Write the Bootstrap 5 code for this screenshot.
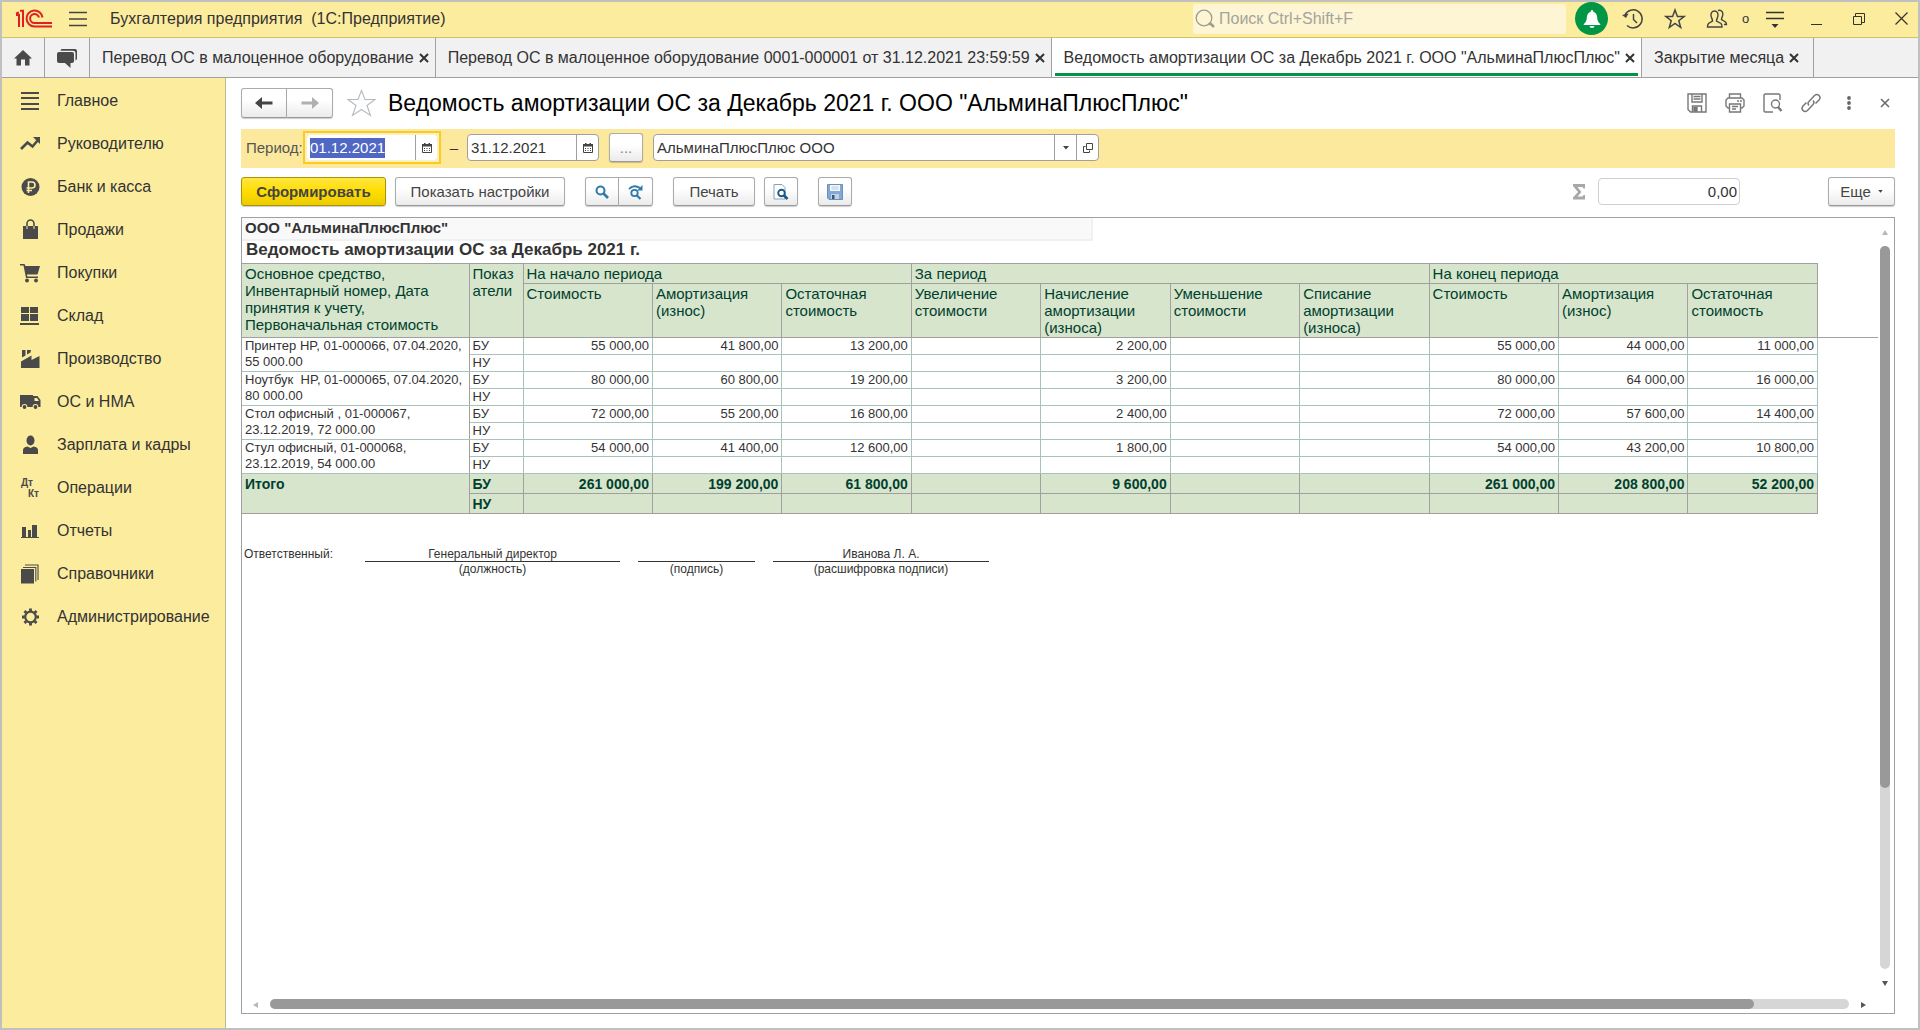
<!DOCTYPE html>
<html lang="ru">
<head>
<meta charset="utf-8">
<meta name="viewport" content="width=device-width, initial-scale=1">
<title>Бухгалтерия предприятия</title>
<link href="https://cdn.jsdelivr.net/npm/bootstrap@5.3.0/dist/css/bootstrap.min.css" rel="stylesheet">
<style>
:root{--yl:#fbec9e;--ln:#a0a0a0;--ink:#333;--gr:#d7e5cc;--tx:#00402f}
body{font-family:"Liberation Sans",Arial,sans-serif;font-size:16px;line-height:20px;color:var(--ink);background:#fff}
.app-frame{min-height:100vh;border:2px solid #c0c0c0}
svg{display:block;flex:none}
button,.app-frame input{font:inherit;color:inherit}
.plain{border:0;background:none;padding:0;display:flex;align-items:center;justify-content:center}
.topbar{height:36px;background:var(--yl);border-bottom:1px solid #cfc06a;padding-bottom:2px}
.app-name{white-space:pre}
.logo-area{width:108px;padding-left:13px;gap:16px}
.find-box{width:373px;height:30px;background:#fdf5d4;border-radius:3px;padding-left:2px;gap:4px;margin-right:9px}
.find-box input{border:0;background:none;outline:0;width:300px;padding:0}
.find-box input::placeholder{color:#a4a49c;opacity:1}
.bell{width:33px;height:33px;border-radius:50%;background:#009646}
.t-s{width:34px;height:30px}
.t-l{width:50px;height:30px}
.cnt{font-size:13px;width:8px}
.tabs{height:40px;background:#f1f1f1;border-bottom:1px solid var(--ln)}
.tab-i{border-right:1px solid var(--ln);position:relative}
.tab-i a{color:var(--ink);text-decoration:none;white-space:nowrap}
.ti-home{width:42px}
.ti-chat{width:44px}
.tab-t{padding:0 6px 0 12px;gap:5px}
.tab-short{padding-right:14px}
.tab-on{background:#fff}
.tab-on::after{content:"";position:absolute;left:3px;right:3px;bottom:1px;height:3px;background:#009646}
.side{width:224px;background:var(--yl);border-right:1px solid #bfb890;padding-top:1px}
.side a{height:43px;padding-left:17px;gap:14px;color:var(--ink);text-decoration:none}
.work{padding:10px 23px 14px 15px;min-width:0}
.tbtn{height:29px;border:1px solid #ababab;border-bottom-color:#999;border-radius:3px;background:linear-gradient(#fff 40%,#ebebeb);box-shadow:0 1px 1px #0003;display:flex;align-items:center;justify-content:center;padding:0;color:#444}
.tbtn.go{background:linear-gradient(#ffe640,#ffdd00 50%,#eccb00);border-color:#a89404;font-weight:700;width:145px}
.pair .tbtn:first-child{border-radius:3px 0 0 3px}
.pair .tbtn:last-child{border-radius:0 3px 3px 0;border-left:0}
.sq{width:34px}
.nav-b{width:46px;height:30px}
.w-set{width:170px}
.w-print{width:82px}
.w-more{width:67px;gap:7px}
.dots{margin:0 10px;color:#888}
.near{margin-left:9px}
.far{margin-left:20px}
.fav{margin:0 12px 0 14px}
.head-t{font-size:23px;line-height:30px;color:#000;font-weight:400}
.acts{gap:14px}
.act{width:24px}
.act:last-child{width:20px}
.band{height:39px;background:#fce99e;margin-top:11px;padding:0 0 2px 5px;font-size:15px}
.band label{width:57px;color:#555}
.dash{width:26px}
.fld{height:27px;border:1px solid var(--ln);border-radius:4px;background:#fff;overflow:hidden}
.fld input{border:0;outline:0;padding:0 0 0 3px;background:none;min-width:0}
.fld button{border-left:1px solid var(--ln);width:22px}
.w-date{width:108px}
.w-org{width:400px}
.hot{border:2px solid #fbcb20;padding:2px;background:#fdf0c0}
.hot .fld{border:0;height:25px}
.fld input::selection{background:#5068c4;color:#fff}
.tools{padding-top:9px;font-size:15px}
.sum-i{width:142px;height:27px;border:1px solid #d0d0d0;border-radius:4px;text-align:right;padding:0 2px;margin:0 88px 0 12px}
.sheet{border:1px solid var(--ln);margin-top:11px;min-height:400px}
.s1{width:851px;height:23px;background:#f9f9f9;border:solid #f1f1f1;border-width:0 2px 2px 0;font-size:15px;font-weight:700;padding-left:3px;line-height:20px}
.s2{font-size:17px;font-weight:700;line-height:18px;padding:0 0 4px 4px}
.rep{border-collapse:collapse;table-layout:fixed;width:1576px;font-size:13px;line-height:16px}
.rep td,.rep th{padding:0 3px;vertical-align:top;border:1px solid #a8c4ba;height:17px;font-weight:400;white-space:pre-wrap}
.rep td.n{text-align:right}
.rep td:first-child[rowspan],.rep th:first-child{border-left:0}
.rep thead th,.rep tfoot td{background:var(--gr);color:var(--tx);border-color:var(--ln)}
.rep thead th{font-size:15px;line-height:17px;padding-top:1px;height:20px}
.rep thead tr+tr th{height:54px}
.rep tfoot td{font-size:14px;line-height:18px;padding-top:1px;font-weight:700;height:20px}
.rep tbody td[rowspan]{border-right-color:var(--ln)}
.c-name{width:227px}
.c-ind{width:54px}
.rule{height:1px;background:var(--ln);width:60px;margin-top:74px}
.sign{font-size:12px;line-height:15px;padding:33px 0 0 2px}
.sign-who{width:121px}
.slot{text-align:center;margin-right:18px}
.slot div{border-bottom:1px solid #333;height:15px}
.slot-a{width:255px}
.slot-b{width:117px}
.slot-c{width:216px}
.vbar{width:15px;padding:12px 4px 12px 0}
.hbar{height:15px;padding:0 28px 0 11px}
.vt{width:10px;border-radius:5px;background:#d6d6d6;margin:11px 0 12px}
.vt div{border-radius:5px;background:#999}
.ht{height:10px;border-radius:5px;background:#d6d6d6;margin:1px 12px}
.ht div{height:10px;border-radius:5px;background:#999}
</style>
</head>
<body>
<div class="app-frame d-flex flex-column">
<header class="topbar d-flex align-items-center">
  <div class="logo-area d-flex align-items-center">
    <svg width="38" height="20" viewBox="0 0 38 20" fill="none" stroke="#e02020" stroke-width="2"><path d="M1 6H4V18M1 4.500 4 3.500M5 1.800H8V18"/><path d="M27.500 8.500A8 8 0 1 0 19.500 17.500H37"/><path d="M24 8.500A4.500 4.500 0 1 0 19.500 14H37"/></svg>
    <button class="plain" aria-label="Меню"><svg width="19" height="18" viewBox="0 0 19 18" stroke="#444" stroke-width="1.500"><path d="M0 2.500H18M0 9H18M0 15.500H18"/></svg></button>
  </div>
  <div class="flex-grow-1 app-name">Бухгалтерия предприятия  (1С:Предприятие)</div>
  <label class="find-box d-flex align-items-center"><svg width="20" height="20" viewBox="0 0 20 20" fill="none" stroke="#9c9c90" stroke-width="1.300"><circle cx="9" cy="9" r="7.800"/><path d="M13.500 15H16L19 18" stroke-width="2.500"/></svg><input type="text" placeholder="Поиск Ctrl+Shift+F" aria-label="Поиск"></label>
  <button class="plain bell" aria-label="Уведомления"><svg width="20" height="20" viewBox="0 0 20 20" fill="#fff"><path d="M10 1C11 1 11.500 2 11.500 3 15 4 15 7 15.500 11 16 13.500 18 14 18.500 16H1.500C2 14 4 13.500 4.500 11 5 7 5 4 8.500 3 8.500 2 9 1 10 1ZM7.500 17H12.500C12 19.500 8 19.500 7.500 17Z"/></svg></button>
  <button class="plain t-l" aria-label="История"><svg width="22" height="22" viewBox="0 0 22 22" fill="none" stroke="#444" stroke-width="1.500"><path d="M3 7A9 9 0 1 1 5 17.500M11.500 6V11.500L15 15"/><path d="M0 7 6.500 5.500 4 10Z" fill="#444" stroke="none"/></svg></button>
  <button class="plain t-s" aria-label="Избранное"><svg width="22" height="22" viewBox="0 0 22 22" fill="none" stroke="#444" stroke-width="1.500"><path d="M11 2 13.400 8.600H20L14.800 12.700 16.700 19.500 11 15.500 5.300 19.500 7.200 12.700 2 8.600H8.600Z"/></svg></button>
  <button class="plain t-l" aria-label="Пользователи"><svg width="22" height="20" viewBox="0 0 22 20" fill="none" stroke="#444" stroke-width="1.400"><path d="M8.500 2C11 2 12.300 4 12 6.500 11.700 9 10.500 10 10.500 12L15 14.500C16 15.500 16 18 16 18H1.500C1.500 18 1.500 15.500 2.500 14.500L6.500 12C6.500 10 5.300 9 5 6.500 4.700 4 6 2 8.500 2Z"/><path d="M12 1.500C16 .5 17.500 3.500 16.500 7 16 8.500 15.500 9.500 15.500 10.500L19.500 13C20.500 14 20.500 15.500 20.500 15.500H18"/></svg></button>
  <span class="cnt">o</span>
  <button class="plain t-l" aria-label="Настройки"><svg width="20" height="20" viewBox="0 0 20 20"><path d="M1 3.500H19M1 9.500H19" stroke="#333" stroke-width="1.600"/><path d="M6.500 15H13.500L10 19Z" fill="#333"/></svg></button>
  <button class="plain t-s" aria-label="Свернуть"><svg width="12" height="14" viewBox="0 0 12 14"><path d="M0 12.500H11" stroke="#333"/></svg></button>
  <button class="plain t-l" aria-label="Развернуть"><svg width="12" height="12" viewBox="0 0 12 12" fill="none" stroke="#333"><path d="M.5 3.500H8.500V11.500H.5ZM2.500 3.500V.5H11.500V9.500H8.500"/></svg></button>
  <button class="plain t-s" aria-label="Закрыть"><svg width="13" height="13" viewBox="0 0 13 13" stroke="#333" stroke-width="1.200"><path d="M.5.5 12.500 12.500M12.500.5.5 12.500"/></svg></button>
</header>
<nav class="tabs d-flex">
  <div class="tab-i d-flex"><button class="plain ti-home" aria-label="Начальная страница"><svg width="20" height="18" viewBox="0 0 20 18" fill="#4a4a4a"><path d="M10 1 19 9.500H16.500V16.500H12V10.500H8V16.500H3.500V9.500H1Z"/></svg></button></div>
  <div class="tab-i d-flex"><button class="plain ti-chat" aria-label="Обсуждения"><svg width="22" height="20" viewBox="0 0 22 20" fill="#4a4a4a"><path d="M6 1H19Q21 1 21 3V10.500Q21 12 19.500 12.500V5Q19.500 2.800 17 2.800H4.500Q4.500 1 6 1Z"/><path d="M3 4H16Q18 4 18 6V13Q18 15 16 15H14.500V20L9 15H3Q1 15 1 13V6Q1 4 3 4Z"/></svg></button></div>
  <div class="tab-i tab-t d-flex align-items-center"><a href="#">Перевод ОС в малоценное оборудование</a><button class="plain" aria-label="Закрыть вкладку"><svg width="10" height="10" viewBox="0 0 10 10" stroke="#333" stroke-width="2"><path d="M1 1 9 9M9 1 1 9"/></svg></button></div>
  <div class="tab-i tab-t d-flex align-items-center"><a href="#">Перевод ОС в малоценное оборудование 0001-000001 от 31.12.2021 23:59:59</a><button class="plain" aria-label="Закрыть вкладку"><svg width="10" height="10" viewBox="0 0 10 10" stroke="#333" stroke-width="2"><path d="M1 1 9 9M9 1 1 9"/></svg></button></div>
  <div class="tab-i tab-t tab-on d-flex align-items-center"><a href="#">Ведомость амортизации ОС за Декабрь 2021 г. ООО "АльминаПлюсПлюс"</a><button class="plain" aria-label="Закрыть вкладку"><svg width="10" height="10" viewBox="0 0 10 10" stroke="#333" stroke-width="2"><path d="M1 1 9 9M9 1 1 9"/></svg></button></div>
  <div class="tab-i tab-t tab-short d-flex align-items-center"><a href="#">Закрытие месяца</a><button class="plain" aria-label="Закрыть вкладку"><svg width="10" height="10" viewBox="0 0 10 10" stroke="#333" stroke-width="2"><path d="M1 1 9 9M9 1 1 9"/></svg></button></div>
</nav>
<div class="d-flex flex-grow-1">
<nav class="side flex-shrink-0">
  <a href="#" class="d-flex align-items-center"><svg width="24" height="24" viewBox="0 0 24 24" stroke="#4a4a4a" stroke-width="2"><path d="M2 4H20M2 9H20M2 15H20M2 20H20"/></svg>Главное</a>
  <a href="#" class="d-flex align-items-center"><svg width="24" height="24" viewBox="0 0 24 24"><path d="M2 17 8.500 10.500 13.500 14.500 19 8" fill="none" stroke="#4a4a4a" stroke-width="2.600"/><path d="M14 5H21V12Z" fill="#4a4a4a"/></svg>Руководителю</a>
  <a href="#" class="d-flex align-items-center"><svg width="24" height="24" viewBox="0 0 24 24"><circle cx="11.500" cy="12" r="9" fill="#4a4a4a"/><path d="M9.500 18V7H13A3 3 0 0 1 13 13H7.500M7.500 15.500H13" fill="none" stroke="#fbec9e" stroke-width="1.600"/></svg>Банк и касса</a>
  <a href="#" class="d-flex align-items-center"><svg width="24" height="24" viewBox="0 0 24 24"><path d="M4 8H19V21H4Z" fill="#4a4a4a"/><path d="M8 11V5.500A3.500 3.500 0 0 1 15 5.500V11" fill="none" stroke="#4a4a4a" stroke-width="1.600"/><path d="M8 8V11M15 8V11" stroke="#fbec9e"/></svg>Продажи</a>
  <a href="#" class="d-flex align-items-center"><svg width="24" height="24" viewBox="0 0 24 24" fill="#4a4a4a"><path d="M1 3H5.500L6.500 5H21L18.500 13.500H8L8.300 15.500H19V17H7L4.500 4.500H1Z"/><circle cx="8" cy="19.500" r="1.900"/><circle cx="17" cy="19.500" r="1.900"/></svg>Покупки</a>
  <a href="#" class="d-flex align-items-center"><svg width="24" height="24" viewBox="0 0 24 24" fill="#4a4a4a"><path d="M2 3H10V9H2ZM11 3H19V9H11ZM2 10H10V17H2ZM11 10H19V17H11ZM1 19H20V21H1Z"/></svg>Склад</a>
  <a href="#" class="d-flex align-items-center"><svg width="24" height="24" viewBox="0 0 24 24" fill="#4a4a4a"><path d="M2 21V14.500L12.500 8.500V13L20.500 9V21ZM3 3H6.500V8.500L3 10.500ZM8 3H12L11.500 5.500 8 7.500Z"/></svg>Производство</a>
  <a href="#" class="d-flex align-items-center"><svg width="24" height="24" viewBox="0 0 24 24" fill="#4a4a4a"><path d="M1 5H14V17H1ZM14 6H18.500L21.500 10V17H14Z"/><path d="M15.500 8H18L20 11H15.500Z" fill="#fbec9e"/><circle cx="5.500" cy="17" r="2.900" fill="#fbec9e"/><circle cx="16.500" cy="17" r="2.900" fill="#fbec9e"/><circle cx="5.500" cy="17" r="1.900"/><circle cx="16.500" cy="17" r="1.900"/></svg>ОС и НМА</a>
  <a href="#" class="d-flex align-items-center"><svg width="24" height="24" viewBox="0 0 24 24" fill="#4a4a4a"><ellipse cx="11.500" cy="7.500" rx="4" ry="5"/><path d="M4 21V17Q4 14 8.500 13.500L11.500 15 14.500 13.500Q19 14 19 17V21Z"/></svg>Зарплата и кадры</a>
  <a href="#" class="d-flex align-items-center"><svg width="24" height="24" viewBox="0 0 24 24" fill="#4a4a4a" font-size="10" font-weight="700" font-family="Liberation Sans, sans-serif"><text x="2" y="10">Дт</text><text x="9" y="21">Кт</text></svg>Операции</a>
  <a href="#" class="d-flex align-items-center"><svg width="24" height="24" viewBox="0 0 24 24" fill="#4a4a4a"><path d="M2 18H20V19H2ZM3 8H7V18H3ZM9 11H12V18H9ZM13 6H18V18H13Z"/></svg>Отчеты</a>
  <a href="#" class="d-flex align-items-center"><svg width="24" height="24" viewBox="0 0 24 24"><path d="M2 7H15V21.500H2Z" fill="#4a4a4a"/><path d="M4 5.500H16.800V19.500M6 3H19V18" fill="none" stroke="#4a4a4a" stroke-width="1.100"/></svg>Справочники</a>
  <a href="#" class="d-flex align-items-center"><svg width="24" height="24" viewBox="0 0 24 24" fill="none" stroke="#4a4a4a"><circle cx="11.500" cy="12" r="5.300" stroke-width="2.200"/><path d="M11.500 3.500V6M11.500 18V20.500M3 12H5.500M17.500 12H20M5.500 6 7.200 7.700M15.800 16.300 17.500 18M17.500 6 15.800 7.700M7.200 16.300 5.500 18" stroke-width="2.800"/></svg>Администрирование</a>
</nav>
<main class="work flex-grow-1 d-flex flex-column">
  <div class="d-flex align-items-center">
    <div class="d-flex pair"><button class="tbtn nav-b" aria-label="Назад"><svg width="18" height="12" viewBox="0 0 18 12" fill="#444"><path d="M7 0V4.500H17.500V7.500H7V12L0 6Z"/></svg></button><button class="tbtn nav-b" aria-label="Вперед"><svg width="18" height="12" viewBox="0 0 18 12" fill="#b0b0b0"><path d="M11 0V4.500H.5V7.500H11V12L18 6Z"/></svg></button></div>
    <button class="plain fav" aria-label="В избранное"><svg width="29" height="28" viewBox="0 0 29 28" fill="none" stroke="#b4bac0" stroke-width="1.100"><path d="M14.500 1.500 18 10.500H28L20 16.500 23.500 26.500 14.500 20.500 5.500 26.500 9 16.500 1 10.500H11Z"/></svg></button>
    <h1 class="head-t m-0 flex-grow-1 text-nowrap">Ведомость амортизации ОС за Декабрь 2021 г. ООО "АльминаПлюсПлюс"</h1>
    <div class="d-flex acts">
      <button class="plain act" aria-label="Сохранить"><svg width="20" height="20" viewBox="0 0 20 20" fill="none" stroke="#777" stroke-width="1.400"><path d="M1 1H19V19H3.500L1 16.500ZM5 1V9H15V1M6.500 3.500H13.500M6.500 6H13.500M5.500 19V13H14.500V19"/><path d="M7 14.500H10V18H7Z" fill="#777"/></svg></button>
      <button class="plain act" aria-label="Печать"><svg width="20" height="20" viewBox="0 0 20 20" fill="none" stroke="#777" stroke-width="1.400"><path d="M4.500 5V1H15.500V5M4.500 15H3L1 13V7L3 5H17L19 7V13L17 15H15.500M4.500 11H15.500V19H4.500ZM7 13.500H13M7 16H11M12 8H14M15 8H17"/></svg></button>
      <button class="plain act" aria-label="Просмотр"><svg width="20" height="20" viewBox="0 0 20 20" fill="none" stroke="#777" stroke-width="1.400"><path d="M17 7V2L16 1H2L1 2V18L2 19H10"/><circle cx="12.500" cy="11" r="4"/><path d="M15 14 18.500 18" stroke-width="2.400"/></svg></button>
      <button class="plain act" aria-label="Ссылка"><svg width="20" height="20" viewBox="0 0 20 20" fill="none" stroke="#777" stroke-width="1.500"><path d="M8 12.500Q6 10.500 8 8.500L13.500 2.500Q16 .5 18 2.500T18 7L14.500 10.500M12 7.500Q14 9.500 12 11.500L6.500 17.500Q4 19.500 2 17.500T2 13L5.500 9.500"/></svg></button>
      <button class="plain act" aria-label="Еще"><svg width="6" height="16" viewBox="0 0 6 16" fill="#666"><circle cx="3" cy="3" r="1.900"/><circle cx="3" cy="8" r="1.900"/><circle cx="3" cy="13" r="1.900"/></svg></button>
      <button class="plain act" aria-label="Закрыть"><svg width="10" height="10" viewBox="0 0 10 10" stroke="#666" stroke-width="1.500"><path d="M1 1 9 9M9 1 1 9"/></svg></button>
    </div>
  </div>
  <div class="band d-flex align-items-center">
    <label for="d1">Период:</label>
    <div class="hot"><div class="fld d-flex"><input id="d1" class="w-date" value="01.12.2021"><button class="plain" aria-label="Календарь"><svg width="10" height="10" viewBox="0 0 10 10"><path d="M.5 1.500H9.500V9.500H.5Z" fill="#fff" stroke="#444"/><path d="M0 1H10V3.500H0ZM2 0H3.500V2H2ZM6.500 0H8V2H6.500ZM2 5H3V6H2ZM4.500 5H5.500V6H4.500ZM7 5H8V6H7ZM2 7H3V8H2ZM4.500 7H5.500V8H4.500ZM7 7H8V8H7Z" fill="#444"/></svg></button></div></div>
    <span class="text-center dash">–</span>
    <div class="fld d-flex"><input class="w-date" value="31.12.2021" aria-label="Конец периода"><button class="plain" aria-label="Календарь"><svg width="10" height="10" viewBox="0 0 10 10"><path d="M.5 1.500H9.500V9.500H.5Z" fill="#fff" stroke="#444"/><path d="M0 1H10V3.500H0ZM2 0H3.500V2H2ZM6.500 0H8V2H6.500ZM2 5H3V6H2ZM4.500 5H5.500V6H4.500ZM7 5H8V6H7ZM2 7H3V8H2ZM4.500 7H5.500V8H4.500ZM7 7H8V8H7Z" fill="#444"/></svg></button></div>
    <button class="tbtn sq dots">...</button>
    <div class="fld d-flex"><input class="w-org" value="АльминаПлюсПлюс ООО" aria-label="Организация"><button class="plain" aria-label="Выбрать"><svg width="6" height="4" viewBox="0 0 6 4" fill="#444"><path d="M0 0H6L3 3.500Z"/></svg></button><button class="plain" aria-label="Открыть"><svg width="10" height="10" viewBox="0 0 10 10" fill="none" stroke="#444"><path d="M3.500.5H9.500V6.500H3.500ZM2.500 3.500H.5V9.500H6.500V7.500"/></svg></button></div>
  </div>
  <div class="tools d-flex align-items-center">
    <button class="tbtn go">Сформировать</button>
    <button class="tbtn w-set near">Показать настройки</button>
    <div class="d-flex pair far"><button class="tbtn sq" aria-label="Найти"><svg width="14" height="14" viewBox="0 0 14 14" fill="none" stroke="#3079ab"><circle cx="5.500" cy="5.500" r="4" stroke-width="2"/><path d="M8.500 8.500 13 13" stroke-width="2.600"/></svg></button><button class="tbtn sq" aria-label="Найти далее"><svg width="16" height="16" viewBox="0 0 16 16" fill="none" stroke="#3079ab"><circle cx="6.500" cy="9" r="3.200" stroke-width="1.800"/><path d="M9 11.500 12.500 15" stroke-width="2.200"/><path d="M1 5Q6 0 12 4" stroke-width="1.800"/><path d="M14.500 1V6.500H9Z" fill="#3079ab" stroke="none"/></svg></button></div>
    <button class="tbtn w-print far">Печать</button>
    <button class="tbtn sq near" aria-label="Предварительный просмотр"><svg width="16" height="16" viewBox="0 0 16 16" fill="none"><path d="M1 .5H9L12 3.500V15H1Z" fill="#fff" stroke="#8aa0b4"/><circle cx="8.500" cy="9" r="3.300" stroke="#1a5a8a" stroke-width="1.900"/><path d="M11 11.500 14.500 15" stroke="#1a5a8a" stroke-width="2.600"/></svg></button>
    <button class="tbtn sq far" aria-label="Сохранить"><svg width="16" height="16" viewBox="0 0 16 16"><path d="M.5.5H15.500V15.500H2L.5 14Z" fill="#7fa9d6" stroke="#6a90ba"/><path d="M3 1H13V7H3Z" fill="#f4f8fc"/><path d="M4.500 3H11.500M4.500 5H11.500" stroke="#bcc8d4"/><path d="M4 10H12V15H4Z" fill="#c8d0d8"/><path d="M5 11H7.500V15H5Z" fill="#335a85"/></svg></button>
    <div class="flex-grow-1"></div>
    <svg width="14" height="16" viewBox="0 0 14 16" fill="#a8a8a8"><path d="M1 0H13V4.500H11.500L10.500 3H5.500L9.500 8 5.500 12.500H10.500L11.500 11H13V15.500H1V13.500L6 8 1 2Z"/></svg>
    <input class="sum-i" value="0,00" aria-label="Сумма">
    <button class="tbtn w-more">Еще<svg width="5" height="3" viewBox="0 0 6 4" fill="#444"><path d="M0 0H6L3 3.500Z"/></svg></button>
  </div>
  <section class="sheet flex-grow-1 d-flex flex-column">
    <div class="d-flex flex-grow-1">
      <div class="flex-grow-1 overflow-hidden">
        <div class="s1">ООО "АльминаПлюсПлюс"</div>
        <div class="s2">Ведомость амортизации ОС за Декабрь 2021 г.</div>
        <div class="d-flex align-items-start">
        <table class="rep flex-shrink-0">
          <colgroup><col class="c-name"><col class="c-ind"><col span="10"></colgroup>
          <thead>
            <tr><th rowspan="2">Основное средство, Инвентарный номер, Дата принятия к учету, Первоначальная стоимость</th><th rowspan="2">Показ
атели</th><th colspan="3">На начало периода</th><th colspan="4">За период</th><th colspan="3">На конец периода</th></tr>
            <tr><th>Стоимость</th><th>Амортизация (износ)</th><th>Остаточная стоимость</th><th>Увеличение стоимости</th><th>Начисление амортизации (износа)</th><th>Уменьшение стоимости</th><th>Списание амортизации (износа)</th><th>Стоимость</th><th>Амортизация (износ)</th><th>Остаточная стоимость</th></tr>
          </thead>
          <tbody>
            <tr><td rowspan="2">Принтер HP, 01-000066, 07.04.2020,
55 000.00</td><td>БУ</td><td class="n">55 000,00</td><td class="n">41 800,00</td><td class="n">13 200,00</td><td></td><td class="n">2 200,00</td><td></td><td></td><td class="n">55 000,00</td><td class="n">44 000,00</td><td class="n">11 000,00</td></tr>
            <tr><td>НУ</td><td></td><td></td><td></td><td></td><td></td><td></td><td></td><td></td><td></td><td></td></tr>
            <tr><td rowspan="2">Ноутбук  HP, 01-000065, 07.04.2020,
80 000.00</td><td>БУ</td><td class="n">80 000,00</td><td class="n">60 800,00</td><td class="n">19 200,00</td><td></td><td class="n">3 200,00</td><td></td><td></td><td class="n">80 000,00</td><td class="n">64 000,00</td><td class="n">16 000,00</td></tr>
            <tr><td>НУ</td><td></td><td></td><td></td><td></td><td></td><td></td><td></td><td></td><td></td><td></td></tr>
            <tr><td rowspan="2">Стол офисный , 01-000067,
23.12.2019, 72 000.00</td><td>БУ</td><td class="n">72 000,00</td><td class="n">55 200,00</td><td class="n">16 800,00</td><td></td><td class="n">2 400,00</td><td></td><td></td><td class="n">72 000,00</td><td class="n">57 600,00</td><td class="n">14 400,00</td></tr>
            <tr><td>НУ</td><td></td><td></td><td></td><td></td><td></td><td></td><td></td><td></td><td></td><td></td></tr>
            <tr><td rowspan="2">Стул офисный, 01-000068,
23.12.2019, 54 000.00</td><td>БУ</td><td class="n">54 000,00</td><td class="n">41 400,00</td><td class="n">12 600,00</td><td></td><td class="n">1 800,00</td><td></td><td></td><td class="n">54 000,00</td><td class="n">43 200,00</td><td class="n">10 800,00</td></tr>
            <tr><td>НУ</td><td></td><td></td><td></td><td></td><td></td><td></td><td></td><td></td><td></td><td></td></tr>
          </tbody>
          <tfoot>
            <tr><td rowspan="2">Итого</td><td>БУ</td><td class="n">261 000,00</td><td class="n">199 200,00</td><td class="n">61 800,00</td><td></td><td class="n">9 600,00</td><td></td><td></td><td class="n">261 000,00</td><td class="n">208 800,00</td><td class="n">52 200,00</td></tr>
            <tr><td>НУ</td><td></td><td></td><td></td><td></td><td></td><td></td><td></td><td></td><td></td><td></td></tr>
          </tfoot>
        </table>
        <div class="rule"></div>
        </div>
        <div class="sign d-flex">
          <span class="sign-who">Ответственный:</span>
          <div class="slot slot-a"><div>Генеральный директор</div>(должность)</div>
          <div class="slot slot-b"><div></div>(подпись)</div>
          <div class="slot slot-c"><div>Иванова Л. А.</div>(расшифровка подписи)</div>
        </div>
      </div>
      <div class="vbar d-flex flex-column align-items-center">
        <svg width="6" height="5" viewBox="0 0 6 5" fill="#b8b8b8"><path d="M0 5H6L3 0Z"/></svg>
        <div class="vt flex-grow-1"><div style="height:75%"></div></div>
        <svg width="6" height="5" viewBox="0 0 6 5" fill="#555"><path d="M0 0H6L3 5Z"/></svg>
      </div>
    </div>
    <div class="hbar d-flex align-items-start">
      <svg class="mt-1" width="5" height="6" viewBox="0 0 5 6" fill="#b8b8b8"><path d="M5 0V6L0 3Z"/></svg>
      <div class="ht flex-grow-1"><div style="width:94%"></div></div>
      <svg class="mt-1" width="5" height="6" viewBox="0 0 5 6" fill="#555"><path d="M0 0V6L5 3Z"/></svg>
    </div>
  </section>
</main>
</div>
</div>
<script src="https://cdn.jsdelivr.net/npm/bootstrap@5.3.0/dist/js/bootstrap.bundle.min.js"></script>
<script>const d=document.getElementById('d1');d.focus();d.select();</script>
</body>
</html>
